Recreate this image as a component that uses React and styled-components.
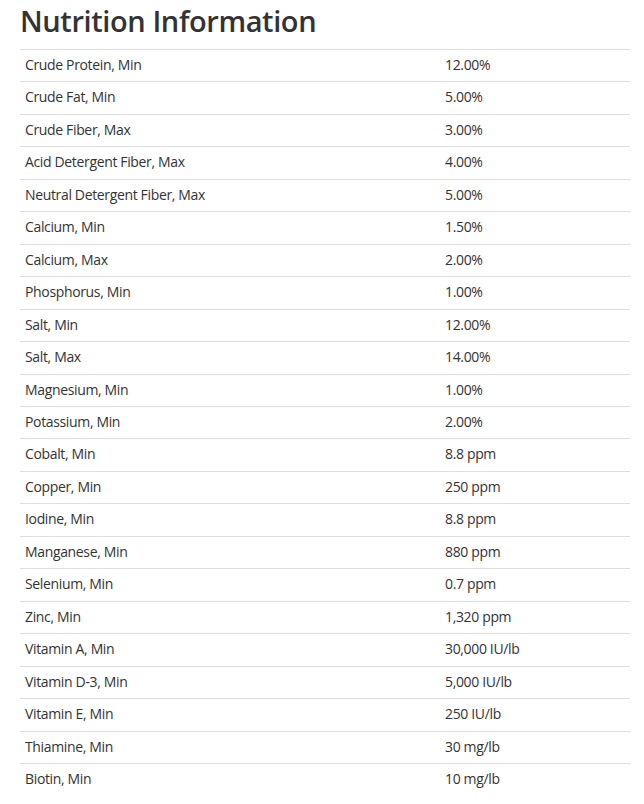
import styled, { createGlobalStyle } from 'styled-components';

const GlobalStyle = createGlobalStyle`
  body {
    margin: 0;
    background: #fff;
    font-family: 'Open Sans', 'Liberation Sans', sans-serif;
    color: #333;
  }
`;

const Section = styled.section`
  padding: 0 14px 0 20px;
`;

const Title = styled.h2`
  margin: 0;
  height: 49px;
  font-size: 29px;
  line-height: 41px;
  font-weight: 600;
  letter-spacing: -0.4px;
  color: #333;
`;

const Table = styled.table`
  width: 100%;
  border-collapse: collapse;
  font-size: 14px;
`;

const Cell = styled.td`
  border-top: 1px solid #ddd;
  padding: 5px 5px 7px;
  line-height: 19.45px;
  width: ${(p) => (p.$label ? '410px' : 'auto')};
  letter-spacing: -0.35px;
`;

const rows = [
  ['Crude Protein, Min', '12.00%'],
  ['Crude Fat, Min', '5.00%'],
  ['Crude Fiber, Max', '3.00%'],
  ['Acid Detergent Fiber, Max', '4.00%'],
  ['Neutral Detergent Fiber, Max', '5.00%'],
  ['Calcium, Min', '1.50%'],
  ['Calcium, Max', '2.00%'],
  ['Phosphorus, Min', '1.00%'],
  ['Salt, Min', '12.00%'],
  ['Salt, Max', '14.00%'],
  ['Magnesium, Min', '1.00%'],
  ['Potassium, Min', '2.00%'],
  ['Cobalt, Min', '8.8 ppm'],
  ['Copper, Min', '250 ppm'],
  ['Iodine, Min', '8.8 ppm'],
  ['Manganese, Min', '880 ppm'],
  ['Selenium, Min', '0.7 ppm'],
  ['Zinc, Min', '1,320 ppm'],
  ['Vitamin A, Min', '30,000 IU/lb'],
  ['Vitamin D-3, Min', '5,000 IU/lb'],
  ['Vitamin E, Min', '250 IU/lb'],
  ['Thiamine, Min', '30 mg/lb'],
  ['Biotin, Min', '10 mg/lb'],
];

export default function App() {
  return (
    <Section>
      <GlobalStyle />
      <Title>Nutrition Information</Title>
      <Table>
        <tbody>
          {rows.map(([name, value]) => (
            <tr key={name}>
              <Cell $label>{name}</Cell>
              <Cell>{value}</Cell>
            </tr>
          ))}
        </tbody>
      </Table>
    </Section>
  );
}
